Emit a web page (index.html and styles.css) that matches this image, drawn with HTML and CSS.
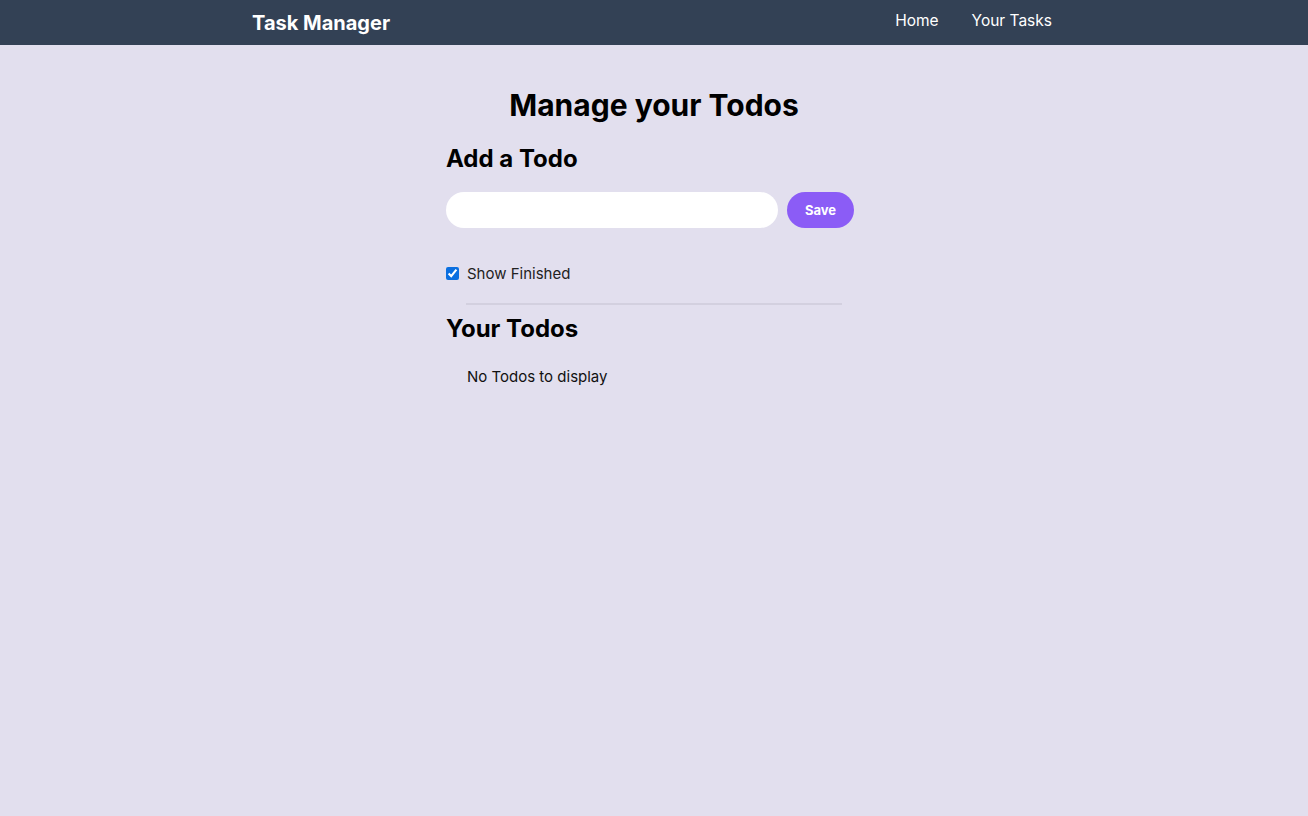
FILE: index.html
```html
<!DOCTYPE html>
<html>
<head>
<meta charset="utf-8">
<link rel="stylesheet" href="styles.css">
</head>
<body>
<nav class="navbar">
  <div class="nav-inner">
    <span class="brand">Task Manager</span>
    <ul class="nav-links">
      <li>Home</li>
      <li>Your Tasks</li>
    </ul>
  </div>
</nav>
<main class="container">
  <h1 class="title">Manage your Todos</h1>
  <h2 class="section-title">Add a Todo</h2>
  <div class="add-row">
    <input class="todo-input" type="text">
    <button class="save-btn">Save</button>
  </div>
  <label class="finished">
    <input type="checkbox" checked>
    <span>Show Finished</span>
  </label>
  <hr class="divider">
  <h2 class="section-title">Your Todos</h2>
  <div class="empty">No Todos to display</div>
</main>
</body>
</html>
```
FILE: styles.css
```css
* { box-sizing: border-box; }
html, body { margin: 0; padding: 0; }
body {
  background: #e2dfee;
  font-family: Inter, "Noto Sans", sans-serif;
  color: #000;
  min-height: 816px;
}
.navbar {
  background: #334155;
  height: 45px;
  color: #fff;
}
.nav-inner {
  width: 804px;
  padding-right: 4px;
  margin: 0 auto;
  height: 100%;
  display: flex;
  align-items: center;
  justify-content: space-between;
}
.brand {
  font-weight: 700;
  font-size: 20px;
  margin-top: 1px;
}
.nav-links {
  list-style: none;
  margin: 0;
  padding: 0;
  display: flex;
  gap: 33px;
  font-size: 15.5px;
  margin-top: -4px;
}
.container {
  width: 416px;
  margin: 0 auto;
  padding-top: 42px;
}
.title {
  text-align: center;
  font-size: 30px;
  font-weight: 700;
  margin: 0;
  line-height: 36px;
}
.section-title {
  font-size: 24px;
  font-weight: 700;
  margin: 20px 0 0;
  line-height: 32px;
}
.add-row {
  display: flex;
  gap: 9px;
  margin-top: 17px;
  width: 408px;
}
.todo-input {
  flex: 0 0 332px;
  height: 36px;
  border: none;
  border-radius: 18px;
  background: #fff;
  padding: 0 16px;
  font: inherit;
  outline: none;
}
.save-btn {
  width: 67px;
  height: 36px;
  border: none;
  border-radius: 18px;
  background: #8b5cf6;
  color: #fff;
  font-family: inherit;
  font-weight: 700;
  font-size: 13px;
}
.finished {
  display: flex;
  align-items: center;
  gap: 8px;
  margin-top: 36px;
  font-size: 15px;
  color: #222;
}
.finished input {
  width: 13px;
  height: 13px;
  margin: 0;
  accent-color: #0b6fe0;
}
.divider {
  margin: 20px 20px 0;
  border: none;
  border-top: 2px solid #d3d0df;
}
.divider + .section-title { margin-top: 8px; }
.empty {
  margin-top: 22px;
  padding-left: 21px;
  font-size: 15px;
  color: #111;
}
```
